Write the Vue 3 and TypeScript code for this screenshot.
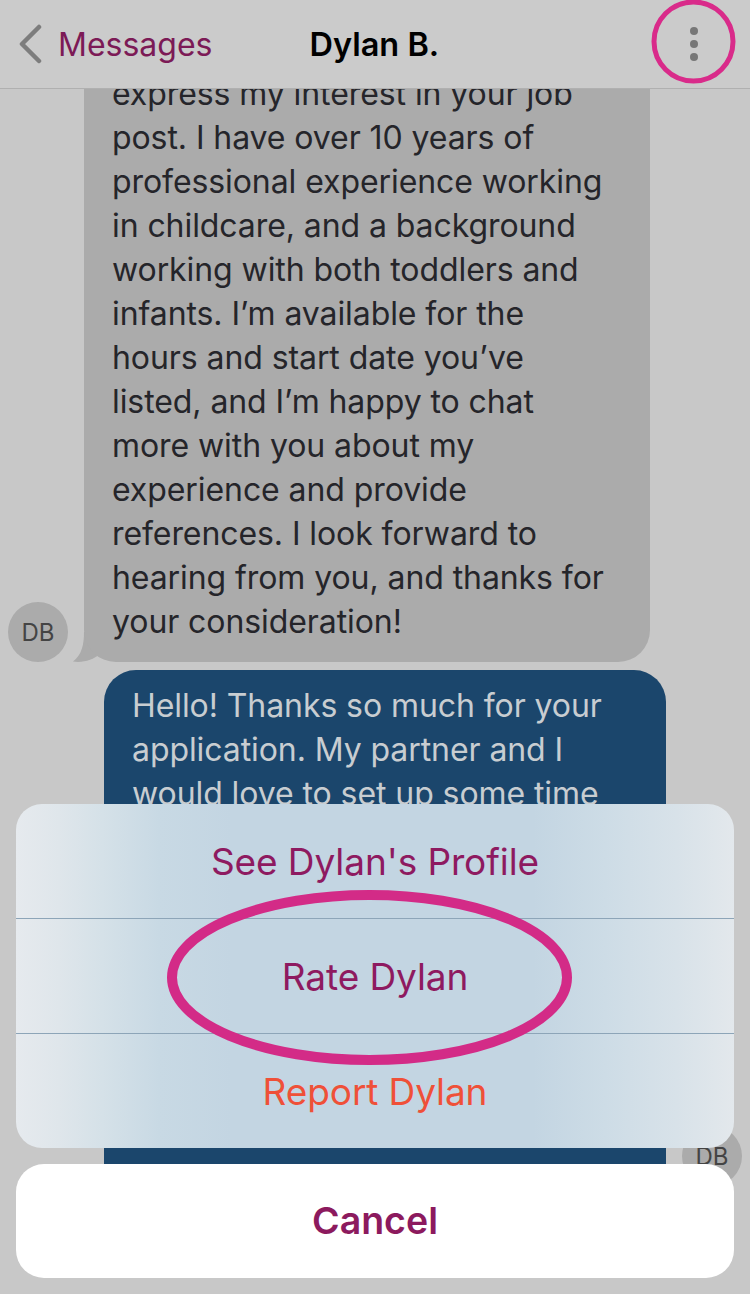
<template>
  <div class="screen">
    <header class="nav">
      <button class="back" type="button">
        <svg class="chevron" width="26" height="40" viewBox="0 0 26 40">
          <path d="M22 3 L5 20 L22 37" fill="none" stroke="#7d7d7d" stroke-width="4.5" stroke-linecap="round" stroke-linejoin="round" />
        </svg>
        <span>Messages</span>
      </button>
      <h1 class="title">Dylan B.</h1>
      <div class="dots"><i></i><i></i><i></i></div>
    </header>

    <main class="chat">
      <div class="row row-in">
        <div class="avatar">DB</div>
        <svg class="tail" width="32" height="30" viewBox="0 0 32 30">
          <path d="M11 0 C11 12 9 23 0 29.5 C10 31 20 28 27 22 L32 0 Z" fill="#ababab" />
        </svg>
        <div class="bubble bubble-in">
          <div v-for="line in incoming" :key="line">{{ line }}</div>
        </div>
      </div>
      <div class="row row-out">
        <div class="bubble bubble-out">
          <div v-for="line in outgoing" :key="line">{{ line }}</div>
        </div>
        <div class="avatar avatar-out">DB</div>
      </div>
    </main>

    <div class="sheet-wrap">
      <div class="sheet">
        <button v-for="item in actions" :key="item.label" type="button" :class="['action', { danger: item.danger }]">
          {{ item.label }}
        </button>
      </div>
      <button class="cancel" type="button">Cancel</button>
    </div>

    <svg class="marks" width="750" height="1294" viewBox="0 0 750 1294">
      <ellipse cx="693.5" cy="41.5" rx="39.5" ry="39.5" fill="none" stroke="#d92b8a" stroke-width="5" />
      <ellipse cx="369.5" cy="977.5" rx="197.5" ry="82.5" fill="none" stroke="#d32b87" stroke-width="10" />
    </svg>
  </div>
</template>

<script setup lang="ts">
const incoming: string[] = [
  'express my interest in your job',
  'post. I have over 10 years of',
  'professional experience working',
  'in childcare, and a background',
  'working with both toddlers and',
  'infants. I’m available for the',
  'hours and start date you’ve',
  'listed, and I’m happy to chat',
  'more with you about my',
  'experience and provide',
  'references. I look forward to',
  'hearing from you, and thanks for',
  'your consideration!',
]

const outgoing: string[] = [
  'Hello! Thanks so much for your',
  'application. My partner and I',
  'would love to set up some time',
]

const actions: { label: string; danger?: boolean }[] = [
  { label: "See Dylan's Profile" },
  { label: 'Rate Dylan' },
  { label: 'Report Dylan', danger: true },
]
</script>

<style>
html,
body {
  margin: 0;
  background: #c8c8c8;
}
</style>

<style scoped>
.screen {
  position: relative;
  width: 750px;
  height: 1294px;
  overflow: hidden;
  background: #c8c8c8;
  font-family: Inter, "Liberation Sans", sans-serif;
}

.nav {
  position: relative;
  z-index: 1;
  height: 89px;
  box-sizing: border-box;
  border-bottom: 1px solid #b0b0b0;
  display: flex;
  align-items: center;
  padding: 0 0 0 17px;
  background: #cbcbcb;
}

.back {
  display: flex;
  align-items: center;
  gap: 15px;
  padding: 0;
  border: none;
  background: none;
  font: inherit;
  font-size: 32px;
  color: #7c1a56;
}

.chevron {
  flex: none;
}

.title {
  margin: 0 0 0 97px;
  font-size: 32.5px;
  font-weight: 600;
  color: #000;
}

.dots {
  margin-left: auto;
  margin-right: 52px;
  display: flex;
  flex-direction: column;
  gap: 5px;
}

.dots i {
  display: block;
  width: 8px;
  height: 8px;
  border-radius: 50%;
  background: #777;
}

.chat {
  display: flex;
  flex-direction: column;
  gap: 8px;
  margin-top: -35px;
}

.row {
  display: flex;
  align-items: flex-end;
}

.row-in {
  padding-left: 8px;
}

.row-out {
  min-height: 516px;
  padding-left: 104px;
}

.avatar {
  flex: none;
  width: 60px;
  height: 60px;
  border-radius: 50%;
  background: #ababab;
  color: #444;
  font-size: 24px;
  display: flex;
  align-items: center;
  justify-content: center;
}

.avatar-out {
  margin-left: 16px;
}

.tail {
  flex: none;
  margin-left: 5px;
  margin-right: -21px;
}

.bubble {
  box-sizing: border-box;
  font-size: 32px;
  line-height: 44px;
  letter-spacing: -0.08px;
  white-space: nowrap;
}

.bubble-in {
  width: 566px;
  padding: 18px 20px 18px 28px;
  border-radius: 0 0 32px 32px;
  background: #ababab;
  color: #25252a;
}

.bubble-out {
  align-self: stretch;
  width: 562px;
  padding: 14px 20px 0 28px;
  border-radius: 32px 32px 0 0;
  background: #1b466c;
  color: #c8cdd1;
}

.sheet-wrap {
  position: absolute;
  left: 16px;
  right: 16px;
  bottom: 16px;
  display: flex;
  flex-direction: column;
  gap: 16px;
}

.sheet {
  display: flex;
  flex-direction: column;
  overflow: hidden;
  border-radius: 26px;
  background: linear-gradient(90deg, #e6eaee 0%, #dfe6eb 6%, #d5e1e8 12%, #c8d9e4 20%, #c3d5e2 30%, #c3d5e2 72%, #cddce6 82%, #d8e2e9 92%, #e3e8ec 100%);
}

.action {
  height: 115px;
  padding: 0;
  border: none;
  border-top: 1px solid #8da5b8;
  background: none;
  font: inherit;
  font-size: 37px;
  letter-spacing: -0.1px;
  color: #8e1a60;
}

.action:first-child {
  height: 114px;
  border-top: none;
}

.danger {
  color: #ef5038;
}

.cancel {
  height: 114px;
  padding: 0 0 2px;
  border: none;
  border-radius: 28px;
  background: #fff;
  font: inherit;
  font-size: 37.5px;
  font-weight: 600;
  color: #8c1a5e;
}

.marks {
  position: absolute;
  left: 0;
  top: 0;
  z-index: 2;
  pointer-events: none;
}
</style>
